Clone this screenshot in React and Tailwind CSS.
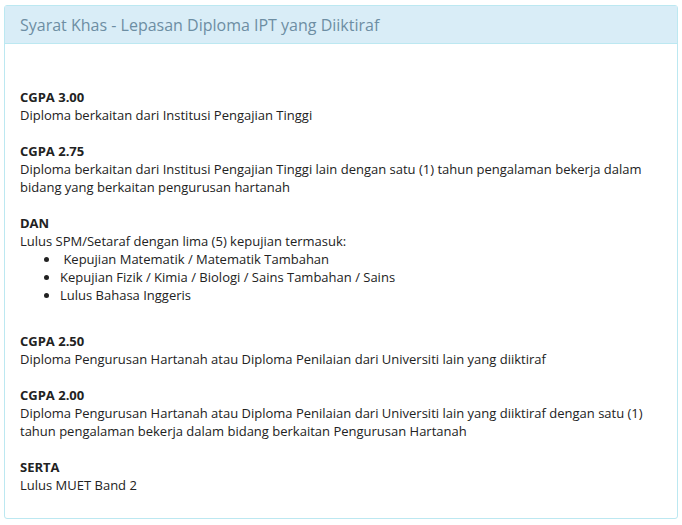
export default function App() {
  const font = { fontFamily: '"Open Sans", sans-serif' };
  return (
    <div className="bg-white w-[682px] h-[525px] pt-[5px] px-[4px]" style={font}>
      <div className="border border-[#bce8f1] rounded-[3px] h-[514px] flex flex-col">
        <div className="bg-[#d9edf7] border-b border-[#bce8f1] h-[38px] flex items-center px-[15px]">
          <h3 className="text-[16px] text-[#6d8ea3] font-normal">Syarat Khas - Lepasan Diploma IPT yang Diiktiraf</h3>
        </div>
        <div className="px-[15px] pt-[44px] text-[13px] leading-[18px] text-[#222]">
          <p className="font-bold">CGPA 3.00</p>
          <p>Diploma berkaitan dari Institusi Pengajian Tinggi</p>
          <p className="font-bold mt-[18px]">CGPA 2.75</p>
          <p>Diploma berkaitan dari Institusi Pengajian Tinggi lain dengan satu (1) tahun pengalaman bekerja dalam bidang yang berkaitan pengurusan hartanah</p>
          <p className="font-bold mt-[18px]">DAN</p>
          <p>Lulus SPM/Setaraf dengan lima (5) kepujian termasuk:</p>
          <ul className="list-disc pl-[40px]">
            <li>&nbsp;Kepujian Matematik / Matematik Tambahan</li>
            <li>Kepujian Fizik / Kimia / Biologi / Sains Tambahan / Sains</li>
            <li>Lulus Bahasa Inggeris</li>
          </ul>
          <p className="font-bold mt-[28px]">CGPA 2.50</p>
          <p>Diploma Pengurusan Hartanah atau Diploma Penilaian dari Universiti lain yang diiktiraf</p>
          <p className="font-bold mt-[18px]">CGPA 2.00</p>
          <p>Diploma Pengurusan Hartanah atau Diploma Penilaian dari Universiti lain yang diiktiraf dengan satu (1) tahun pengalaman bekerja dalam bidang berkaitan Pengurusan Hartanah</p>
          <p className="font-bold mt-[18px]">SERTA</p>
          <p>Lulus MUET Band 2</p>
        </div>
      </div>
    </div>
  );
}
